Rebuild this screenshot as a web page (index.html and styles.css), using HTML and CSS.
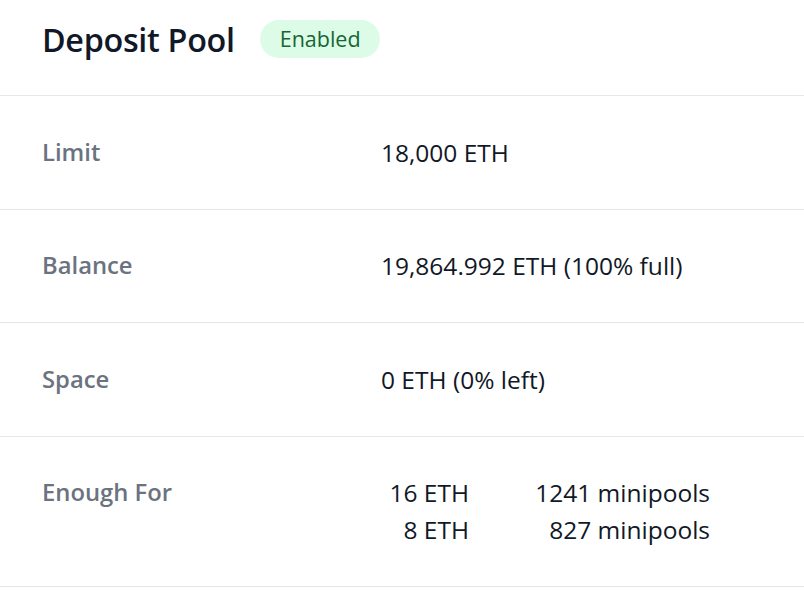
FILE: index.html
```html
<!DOCTYPE html>
<html>
<head>
<meta charset="utf-8">
<link rel="stylesheet" href="styles.css">
</head>
<body>
<div class="card">
  <div class="header">
    <h1 class="title">Deposit Pool</h1>
    <span class="badge">Enabled</span>
  </div>
  <div class="row">
    <div class="label">Limit</div>
    <div class="value">18,000 ETH</div>
  </div>
  <div class="row">
    <div class="label">Balance</div>
    <div class="value">19,864.992 ETH (100% full)</div>
  </div>
  <div class="row">
    <div class="label">Space</div>
    <div class="value">0 ETH (0% left)</div>
  </div>
  <div class="row">
    <div class="label">Enough For</div>
    <div class="value">
      <div class="enough">
        <span class="amt">16 ETH</span><span class="cnt">1241 minipools</span>
        <span class="amt">8 ETH</span><span class="cnt">827 minipools</span>
      </div>
    </div>
  </div>
</div>
</body>
</html>
```
FILE: styles.css
```css
html, body {
  margin: 0;
  padding: 0;
  background: #ffffff;
}
body {
  font-family: "Open Sans", "Noto Sans", sans-serif;
  color: #111827;
}
.card {
  width: 804px;
}
.header {
  display: flex;
  align-items: center;
  gap: 25px;
  height: 77px;
  padding: 0 0 18px 42px;
  border-bottom: 1px solid #e5e7eb;
}
.title {
  margin: 0;
  font-size: 32.3px;
  font-weight: 600;
  letter-spacing: -0.3px;
  color: #111827;
}
.badge {
  display: inline-flex;
  align-items: center;
  height: 38px;
  padding: 0 19px 0 20px;
  border-radius: 19px;
  background: #dcfce7;
  color: #166534;
  font-size: 21.5px;
  font-weight: 500;
}
.row {
  display: grid;
  grid-template-columns: 339px 1fr;
  padding: 37.75px 0 37.75px 42px;
  border-bottom: 1px solid #e5e7eb;
  line-height: 37px;
}
.label {
  color: #6b7280;
  font-weight: 600;
  font-size: 23.8px;
}
.value {
  color: #111827;
  font-size: 24.5px;
}
.enough {
  display: grid;
  grid-template-columns: 88px 241px;
  text-align: right;
}
```
